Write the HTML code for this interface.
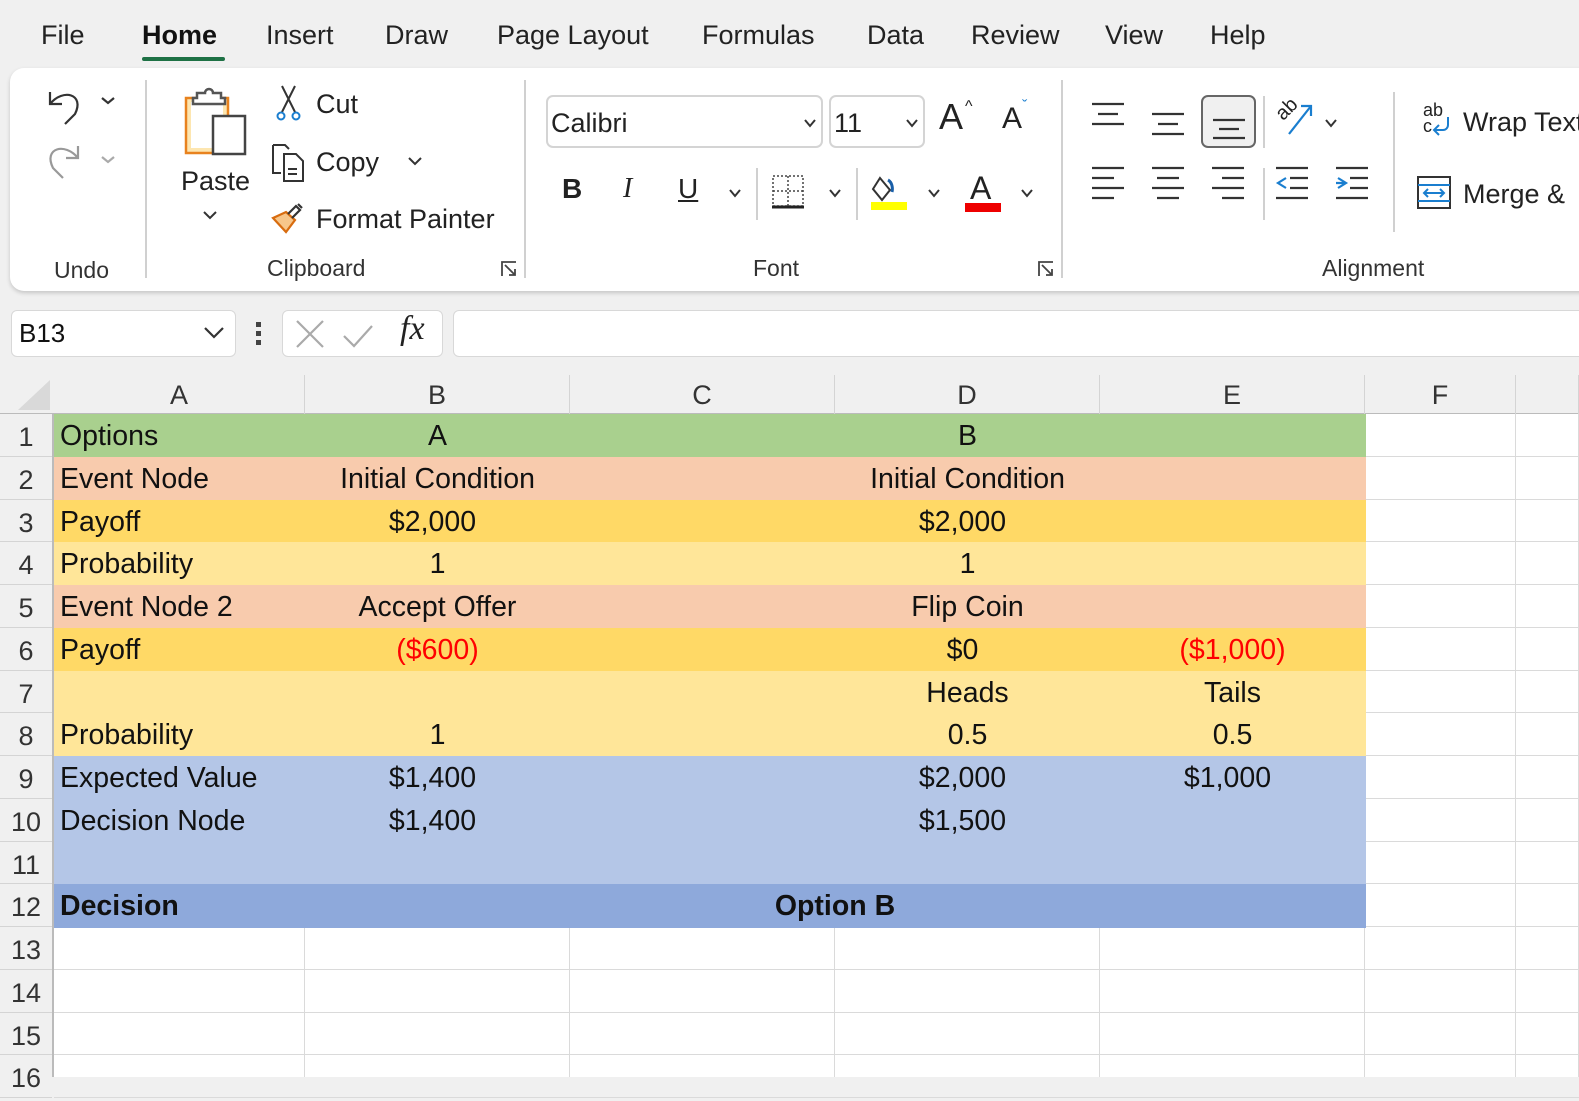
<!DOCTYPE html>
<html><head><meta charset="utf-8"><style>
*{box-sizing:border-box;margin:0;padding:0}
body{width:1579px;height:1077px;overflow:hidden;background:#f0f0f0;font-family:"Liberation Sans",sans-serif;color:#222;position:relative}
.a{position:absolute;white-space:nowrap}
.tab{font-size:27px;top:20px;color:#222}
.rib{position:absolute;left:10px;top:68px;width:1600px;height:223px;background:#fff;border-radius:14px;box-shadow:0 2px 4px rgba(0,0,0,.18)}
.lbl{font-size:23px;color:#333}
.t25{font-size:27px;color:#222}
.sep{position:absolute;width:2px;background:#d0d0d0}
.grid{position:absolute;left:0;top:375px;width:1579px;height:702px;background:#fff}
.cell{position:absolute;font-size:28.5px;color:#111;line-height:44px;white-space:nowrap}
.hl{position:absolute;background:#dadada}
</style></head><body>
<div class="a tab" style="left:41px">File</div>
<div class="a tab" style="left:142px;font-weight:bold;color:#111">Home</div>
<div class="a" style="left:142px;top:57px;width:83px;height:4px;background:#1e7145;border-radius:2px"></div>
<div class="a tab" style="left:266px">Insert</div>
<div class="a tab" style="left:385px">Draw</div>
<div class="a tab" style="left:497px">Page Layout</div>
<div class="a tab" style="left:702px">Formulas</div>
<div class="a tab" style="left:867px">Data</div>
<div class="a tab" style="left:971px">Review</div>
<div class="a tab" style="left:1105px">View</div>
<div class="a tab" style="left:1210px">Help</div>

<div class="rib"></div>
<svg class="a" style="left:45px;top:84px" width="90" height="100" fill="none" stroke-width="2.2">
<path d="M5 8 v12 h12 M5 20 C18 4 40 10 30 30 L20 40" stroke="#333"/>
<path d="M57 14 l6 5 6-5" stroke="#333"/>
<path d="M33 62 v12 h-12 M33 74 C20 58 -2 64 8 84 L18 94" stroke="#999"/>
<path d="M57 73 l6 5 6-5" stroke="#aaa"/>
</svg>
<div class="a lbl" style="left:54px;top:257px">Undo</div>
<div class="sep" style="left:145px;top:80px;height:198px"></div>
<svg class="a" style="left:183px;top:86px" width="68" height="72" fill="none" stroke-width="2.5">
<rect x="3" y="12" width="42" height="55" fill="#fde6b0" stroke="#e8821e"/>
<rect x="8" y="16" width="32" height="46" fill="#fff" stroke="none"/>
<path d="M14 12 v-5 h8 a4 4 0 0 1 8 0 h8 v5 h4 v6 h-32 v-6z" fill="#fff" stroke="#555"/>
<rect x="30" y="30" width="32" height="38" fill="#fff" stroke="#444"/>
</svg>
<div class="a t25" style="left:181px;top:166px">Paste</div>
<svg class="a" style="left:202px;top:210px" width="16" height="10"><path d="M2 2 l6 6 6-6" stroke="#333" stroke-width="2" fill="none"/></svg>
<svg class="a" style="left:275px;top:84px" width="30" height="40" fill="none" stroke-width="2"><path d="M7 2 L20 28 M20 2 L7 28" stroke="#333"/><circle cx="6" cy="32" r="3.5" stroke="#1a7ecf"/><circle cx="21" cy="32" r="3.5" stroke="#1a7ecf"/></svg>
<div class="a t25" style="left:316px;top:89px">Cut</div>
<svg class="a" style="left:270px;top:142px" width="36" height="40" fill="none" stroke="#333" stroke-width="2"><path d="M3 3 h12 l4 4 M3 3 v28 h8"/><path d="M14 12 h12 l7 7 v20 h-19z"/><path d="M18 27 h9 M18 32 h9"/></svg>
<div class="a t25" style="left:316px;top:147px">Copy</div>
<svg class="a" style="left:407px;top:156px" width="16" height="10"><path d="M2 2 l6 6 6-6" stroke="#333" stroke-width="2" fill="none"/></svg>
<svg class="a" style="left:270px;top:200px" width="36" height="36" fill="none" stroke-width="2.2"><path d="M3 18 l13 14 l9 -12 l-9 -8z" fill="#f7c68a" stroke="#d86c0f"/><path d="M18 14 l8 -8 l4 4 l-8 8" stroke="#333"/><path d="M28 4 l4 4" stroke="#333"/></svg>
<div class="a t25" style="left:316px;top:204px">Format Painter</div>
<div class="a lbl" style="left:267px;top:255px">Clipboard</div>
<svg class="a" style="left:500px;top:260px" width="18" height="18" fill="none" stroke="#444" stroke-width="1.8"><path d="M2 16 V2 H16 M5 5 l10 10 M9 15 h6 v-6"/></svg>
<div class="sep" style="left:524px;top:80px;height:198px"></div>
<div class="a" style="left:546px;top:95px;width:277px;height:53px;border:2px solid #d4d4d4;border-radius:7px"></div>
<div class="a t25" style="left:551px;top:108px">Calibri</div>
<svg class="a" style="left:803px;top:118px" width="14" height="10"><path d="M2 2 l5 6 5-6" stroke="#333" stroke-width="2" fill="none"/></svg>
<div class="a" style="left:829px;top:95px;width:96px;height:53px;border:2px solid #d4d4d4;border-radius:7px"></div>
<div class="a t25" style="left:834px;top:108px">11</div>
<svg class="a" style="left:905px;top:118px" width="14" height="10"><path d="M2 2 l5 6 5-6" stroke="#333" stroke-width="2" fill="none"/></svg>
<div class="a" style="left:939px;top:96px;font-size:36px">A</div>
<div class="a" style="left:965px;top:98px;font-size:16px">^</div>
<div class="a" style="left:1002px;top:102px;font-size:30px">A</div>
<div class="a" style="left:1022px;top:98px;font-size:16px;color:#1a7ecf">ˇ</div>
<div class="a" style="left:562px;top:173px;font-size:28px;font-weight:bold">B</div>
<div class="a" style="left:623px;top:173px;font-size:28px;font-style:italic;font-family:'Liberation Serif',serif">I</div>
<div class="a" style="left:678px;top:173px;font-size:28px;text-decoration:underline">U</div>
<svg class="a" style="left:728px;top:188px" width="14" height="10"><path d="M2 2 l5 6 5-6" stroke="#333" stroke-width="2" fill="none"/></svg>
<div class="sep" style="left:756px;top:168px;height:52px"></div>
<svg class="a" style="left:771px;top:174px" width="36" height="36" fill="none" stroke="#444" stroke-width="1.5"><rect x="2" y="2" width="30" height="30" stroke-dasharray="2 2"/><path d="M17 2 v30 M2 17 h30" stroke-dasharray="2 2"/><path d="M1 33 h32" stroke-width="3" stroke="#222"/></svg>
<svg class="a" style="left:828px;top:188px" width="14" height="10"><path d="M2 2 l5 6 5-6" stroke="#333" stroke-width="2" fill="none"/></svg>
<div class="sep" style="left:856px;top:168px;height:52px"></div>
<svg class="a" style="left:870px;top:174px" width="40" height="38" fill="none" stroke-width="2"><path d="M10 4 l10 12 -8 10 -9 -11z" stroke="#333"/><path d="M18 6 c4 2 5 8 4 12" stroke="#1a5fa8" stroke-width="3"/><rect x="1" y="28" width="36" height="8" fill="#ffff00" stroke="none"/></svg>
<svg class="a" style="left:927px;top:188px" width="14" height="10"><path d="M2 2 l5 6 5-6" stroke="#333" stroke-width="2" fill="none"/></svg>
<div class="a" style="left:970px;top:170px;font-size:32px">A</div>
<div class="a" style="left:965px;top:203px;width:36px;height:9px;background:#e00"></div>
<svg class="a" style="left:1020px;top:188px" width="14" height="10"><path d="M2 2 l5 6 5-6" stroke="#333" stroke-width="2" fill="none"/></svg>
<div class="a lbl" style="left:753px;top:255px">Font</div>
<svg class="a" style="left:1037px;top:260px" width="18" height="18" fill="none" stroke="#444" stroke-width="1.8"><path d="M2 16 V2 H16 M5 5 l10 10 M9 15 h6 v-6"/></svg>
<div class="sep" style="left:1061px;top:80px;height:198px"></div>
<svg class="a" style="left:1090px;top:100px" width="290" height="110" stroke="#333" stroke-width="2.2" fill="none">
<path d="M2 4 h32 M8 14 h20 M2 24 h32"/>
<path d="M62 14 h32 M68 24 h20 M62 34 h32"/>
<path d="M2 68 h32 M2 78 h22 M2 88 h32 M2 98 h22"/>
<path d="M62 68 h32 M67 78 h22 M62 88 h32 M67 98 h22"/>
<path d="M122 68 h32 M132 78 h22 M122 88 h32 M132 98 h22"/>
<path d="M186 68 h32 M200 78 h18 M200 88 h18 M186 98 h32"/><path d="M196 78 l-8 5 8 5" stroke="#1a7ecf"/>
<path d="M246 68 h32 M260 78 h18 M260 88 h18 M246 98 h32"/><path d="M248 78 l8 5 -8 5 M246 83 h10" stroke="#1a7ecf"/>
</svg>
<div class="a" style="left:1201px;top:95px;width:55px;height:53px;border:2px solid #666;border-radius:7px;background:#f0f0f0"></div>
<svg class="a" style="left:1211px;top:112px" width="36" height="30" stroke="#333" stroke-width="2.2"><path d="M2 8 h32 M8 17 h20 M2 26 h32"/></svg>
<div class="sep" style="left:1263px;top:96px;height:52px"></div>
<div class="sep" style="left:1263px;top:168px;height:52px"></div>
<div class="a" style="left:1276px;top:98px;font-size:20px;transform:rotate(-45deg)">ab</div>
<svg class="a" style="left:1285px;top:102px" width="30" height="34"><path d="M4 32 L26 4 M16 4 h10 v10" stroke="#1a7ecf" stroke-width="2.2" fill="none"/></svg>
<svg class="a" style="left:1324px;top:118px" width="14" height="10"><path d="M2 2 l5 6 5-6" stroke="#333" stroke-width="2" fill="none"/></svg>
<div class="sep" style="left:1393px;top:92px;height:140px"></div>
<div class="a" style="left:1423px;top:102px;font-size:18px;line-height:16px">ab<br>c</div>
<svg class="a" style="left:1430px;top:115px" width="24" height="24"><path d="M18 2 v8 a5 5 0 0 1 -5 5 h-8 M9 10 l-5 5 5 5" stroke="#1a7ecf" stroke-width="2" fill="none"/></svg>
<div class="a t25" style="left:1463px;top:107px">Wrap Text</div>
<svg class="a" style="left:1416px;top:175px" width="38" height="36" fill="none" stroke-width="2"><rect x="2" y="2" width="32" height="31" stroke="#333"/><path d="M2 10 h32 M2 26 h32" stroke="#1a7ecf"/><path d="M8 18 h20 M12 14 l-4 4 4 4 M24 14 l4 4 -4 4" stroke="#1a7ecf"/></svg>
<div class="a t25" style="left:1463px;top:179px">Merge &amp;</div>
<div class="a lbl" style="left:1322px;top:255px">Alignment</div>

<div class="a" style="left:11px;top:310px;width:225px;height:47px;background:#fff;border:1px solid #d8d8d8;border-radius:6px"></div>
<div class="a" style="left:19px;top:318px;font-size:26px;color:#111">B13</div>
<svg class="a" style="left:203px;top:326px" width="22" height="14"><path d="M2 2 l9 9 9-9" stroke="#333" stroke-width="2.2" fill="none"/></svg>
<div class="a" style="left:256px;top:322px;width:5px;height:5px;background:#444"></div>
<div class="a" style="left:256px;top:331px;width:5px;height:5px;background:#444"></div>
<div class="a" style="left:256px;top:340px;width:5px;height:5px;background:#444"></div>
<div class="a" style="left:282px;top:310px;width:161px;height:47px;background:#fff;border:1px solid #d8d8d8;border-radius:6px"></div>
<svg class="a" style="left:294px;top:318px" width="140" height="34" fill="none" stroke="#aaa" stroke-width="2.2"><path d="M3 3 l26 26 M29 3 l-26 26"/><path d="M50 18 l10 10 l18 -20"/></svg>
<div class="a" style="left:400px;top:310px;font-size:34px;font-style:italic;font-family:'Liberation Serif',serif;color:#222">fx</div>
<div class="a" style="left:453px;top:310px;width:1140px;height:47px;background:#fff;border:1px solid #d8d8d8;border-radius:6px"></div>

<div class="grid"></div>
<div class="a" style="left:0;top:375px;width:1579px;height:39px;background:#f0f0f0;border-bottom:1px solid #bbb"></div>
<div class="a" style="left:0;top:414px;width:54px;height:663px;background:#f0f0f0;border-right:2px solid #bbb"></div>
<svg class="a" style="left:16px;top:378px" width="36" height="34"><path d="M34 2 V32 H2z" fill="#d9d9d9"/></svg>
<div id="g"></div>
<script>
var H=42.75,T=414,cols=[54,305,570,835,1100,1365,1516,1579];
var s='';
var names='ABCDEFG';
for(var i=0;i<7;i++){var l=cols[i],w=cols[i+1]-l;
 s+='<div class="a" style="left:'+l+'px;top:375px;width:'+w+'px;height:39px;text-align:center;font-size:27px;line-height:40px;color:#333;border-right:1px solid #d4d4d4">'+(i<6?names[i]:'')+'</div>';
 s+='<div class="hl" style="left:'+(cols[i+1]-1)+'px;top:414px;width:1px;height:663px"></div>';}
for(var r=1;r<=16;r++){var y=T+(r-1)*H;
 s+='<div class="a" style="left:0;top:'+y+'px;width:52px;height:'+H+'px;text-align:center;font-size:27px;line-height:46px;color:#333;border-bottom:1px solid #d4d4d4">'+r+'</div>';
 s+='<div class="hl" style="left:54px;top:'+(y+H-1)+'px;width:1525px;height:1px"></div>';}
var fills=['#A9D08E','#F8CBAD','#FFD966','#FFE699','#F8CBAD','#FFD966','#FFE699','#FFE699','#B4C6E7','#B4C6E7','#B4C6E7','#8EA9DB'];
for(var r=0;r<12;r++){s+='<div class="a" style="left:54px;top:'+(T+r*H)+'px;width:1312px;height:'+(H+0.5)+'px;background:'+fills[r]+'"></div>';}
function c(r,l,w,t,al,ex){var y=T+(r-1)*H;s+='<div class="cell" style="left:'+l+'px;top:'+y+'px;width:'+w+'px;text-align:'+al+';'+(ex||'')+'">'+t+'</div>';}
var L=['Options','Event Node','Payoff','Probability','Event Node 2','Payoff','','Probability','Expected Value','Decision Node'];
for(var r=0;r<10;r++)c(r+1,60,240,L[r],'left');
c(1,305,265,'A','center');c(1,835,265,'B','center');
c(2,305,265,'Initial Condition','center');c(2,835,265,'Initial Condition','center');
c(3,305,255,'$2,000','center');c(3,835,255,'$2,000','center');
c(4,305,265,'1','center');c(4,835,265,'1','center');
c(5,305,265,'Accept Offer','center');c(5,835,265,'Flip Coin','center');
c(6,305,265,'($600)','center','color:#f00');c(6,835,255,'$0','center');c(6,1100,265,'($1,000)','center','color:#f00');
c(7,835,265,'Heads','center');c(7,1100,265,'Tails','center');
c(8,305,265,'1','center');c(8,835,265,'0.5','center');c(8,1100,265,'0.5','center');
c(9,305,255,'$1,400','center');c(9,835,255,'$2,000','center');c(9,1100,255,'$1,000','center');
c(10,305,255,'$1,400','center');c(10,835,255,'$1,500','center');
c(12,60,240,'Decision','left','font-weight:bold');c(12,570,530,'Option B','center','font-weight:bold');
document.getElementById('g').innerHTML=s;
</script>
</body></html>
